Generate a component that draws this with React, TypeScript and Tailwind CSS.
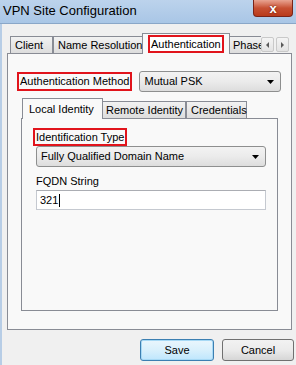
import React from "react";

const Caret = () => (
  <svg width="7" height="4" viewBox="0 0 7 4" className="shrink-0">
    <path d="M0 0h7L3.5 4z" fill="#000" />
  </svg>
);

function Select({ value, className }: { value: string; className: string }) {
  return (
    <div
      className={`flex items-center justify-between rounded-[3px] border border-[#8e8f8f] bg-gradient-to-b from-[#f3f3f3] via-[#ebebeb] to-[#dddddd] pl-[4px] pr-[6px] ${className}`}
    >
      <span className="text-[11px] leading-none text-black">{value}</span>
      <Caret />
    </div>
  );
}

function Tab({
  label,
  width,
  selected,
  boxed,
}: {
  label: string;
  width: string;
  selected?: boolean;
  boxed?: boolean;
}) {
  if (selected) {
    return (
      <div
        className={`relative z-10 -mx-[2px] flex h-[21px] items-start border border-b-0 border-[#898c95] bg-[#f9f9f9] ${width}`}
      >
        <span
          className={`ml-[5px] mt-[1px] flex h-[18px] items-center whitespace-nowrap px-[1px] text-[11px] ${
            boxed ? "border-2 border-[#e1141c] bg-white" : ""
          }`}
        >
          {label}
        </span>
      </div>
    );
  }
  return (
    <div
      className={`flex h-[18px] items-center border border-b-0 border-[#898c95] bg-gradient-to-b from-[#f2f2f2] to-[#dcdcdc] px-[4px] text-[11px] ${width}`}
    >
      <span className="whitespace-nowrap">{label}</span>
    </div>
  );
}

function ScrollArrow({ dir }: { dir: "l" | "r" }) {
  return (
    <div className="flex h-[15px] w-[13px] items-center justify-center rounded-[2px] border border-[#c9c9c9] bg-gradient-to-b from-[#f4f4f4] to-[#e3e3e3]">
      <svg width="3" height="6" viewBox="0 0 3 6">
        <path d={dir === "l" ? "M3 0v6L0 3z" : "M0 0v6l3-3z"} fill="#5a5a5a" />
      </svg>
    </div>
  );
}

export default function App() {
  return (
    <div className="relative h-[365px] w-[296px] overflow-hidden bg-[#f0f0f0] font-['Liberation_Sans',Arial,sans-serif] text-black">
      {/* Title bar */}
      <div className="flex h-[24px] items-start justify-between border-b border-[#8aa7c8] bg-gradient-to-b from-[#bcd3ec] to-[#a9c6e6]">
        <span className="pl-[3px] pt-[4px] text-[13px] leading-none text-black">VPN Site Configuration</span>
        <div className="mr-[3px] flex h-[17px] w-[40px] items-center justify-center rounded-b-[4px] border border-t-0 border-[#7a2318] bg-gradient-to-b from-[#e8a391] via-[#c75033] to-[#b93a1a]">
          <span className="text-[13px] font-bold leading-none text-white [text-shadow:0_0_2px_#5a1000]">x</span>
        </div>
      </div>

      {/* Client area */}
      <div className="flex h-[341px] flex-col border-l-[2px] border-[#b7cde6] pl-[5px]">
        {/* Outer tabs */}
        <div className="mt-[9px] flex items-end pl-[3px]">
          <Tab label="Client" width="w-[43px]" />
          <Tab label="Name Resolution" width="w-[91px]" />
          <Tab label="Authentication" width="w-[88px]" selected boxed />
          <div className="flex h-[18px] w-[33px] items-center overflow-hidden border border-b-0 border-r-0 border-[#898c95] bg-gradient-to-b from-[#f2f2f2] to-[#dcdcdc] pl-[4px] text-[11px]">
            Phase
          </div>
          <div className="mb-[2px] flex gap-[2px] self-end">
            <ScrollArrow dir="l" />
            <ScrollArrow dir="r" />
          </div>
        </div>

        {/* Outer page */}
        <div className="-mt-[1px] flex h-[277px] w-[285px] flex-col border border-[#898c95] bg-[#f9f9f9]">
          <div className="mt-[17px] flex items-center pl-[9px]">
            <span className="flex h-[19px] items-center whitespace-nowrap border-2 border-[#e1141c] px-[1px] text-[11px]">
              Authentication Method
            </span>
            <Select value="Mutual PSK" className="ml-[7px] h-[21px] w-[142px]" />
          </div>

          {/* Inner tabs */}
          <div className="mt-[6px] flex items-end pl-[16px]">
            <Tab label="Local Identity" width="w-[81px]" selected />
            <Tab label="Remote Identity" width="w-[85px]" />
            <Tab label="Credentials" width="w-[61px]" />
          </div>

          <div className="-mt-[1px] ml-[13px] flex h-[193px] w-[257px] flex-col items-start border border-[#898c95] bg-[#f9f9f9] pl-[11px]">
            <span className="mt-[9px] flex h-[18px] items-center whitespace-nowrap border-2 border-[#e1141c] px-[1px] text-[11px]">
              Identification Type
            </span>
            <Select value="Fully Qualified Domain Name" className="ml-[3px] h-[21px] w-[230px]" />
            <span className="ml-[3px] mt-[9px] text-[11px] leading-none">FQDN String</span>
            <div className="ml-[3px] mt-[3px] flex h-[20px] w-[230px] items-center border border-[#c5c9d0] border-t-[#abadb3] bg-white pl-[3px] text-[11px]">
              321<span className="ml-[1px] inline-block h-[13px] w-[1px] bg-black" />
            </div>
          </div>
        </div>

        {/* Buttons */}
        <div className="mt-[9px] flex justify-end gap-[8px] pr-[2px]">
          <button className="h-[22px] w-[74px] rounded-[3px] border border-[#3c7fb1] bg-gradient-to-b from-[#eaf6fd] via-[#d9f0fc] to-[#bee6fd] text-[11px] shadow-[inset_0_0_0_1px_#a7d9f5]">
            Save
          </button>
          <button className="h-[22px] w-[72px] rounded-[3px] border border-[#707070] bg-gradient-to-b from-[#f2f2f2] via-[#ebebeb] to-[#d6d6d6] text-[11px]">
            Cancel
          </button>
        </div>
      </div>
    </div>
  );
}
